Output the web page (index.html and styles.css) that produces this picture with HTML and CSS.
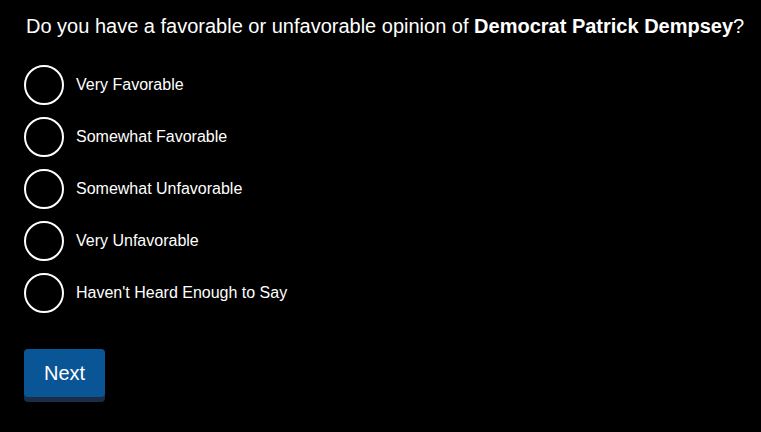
FILE: index.html
```html
<!DOCTYPE html>
<html lang="en">
<head>
    <meta charset="UTF-8">
    <meta name="viewport" content="width=device-width, initial-scale=1.0">
    <title>Survey Question</title>
    <link rel="stylesheet" href="styles.css">
</head>
<body>
    <div class="survey">
        <h1 class="question">Do you have a favorable or unfavorable opinion of <strong>Democrat Patrick Dempsey</strong>?</h1>
        <div class="options">
            <label class="option"><input type="radio" name="opinion" value="1"><span class="dot"></span>Very Favorable</label>
            <label class="option"><input type="radio" name="opinion" value="2"><span class="dot"></span>Somewhat Favorable</label>
            <label class="option"><input type="radio" name="opinion" value="3"><span class="dot"></span>Somewhat Unfavorable</label>
            <label class="option"><input type="radio" name="opinion" value="4"><span class="dot"></span>Very Unfavorable</label>
            <label class="option"><input type="radio" name="opinion" value="5"><span class="dot"></span>Haven't Heard Enough to Say</label>
        </div>
        <button class="next" type="button">Next</button>
    </div>
</body>
</html>
```

FILE: styles.css
```css
body {
    margin: 0;
    padding: 0;
    background-color: #000;
    color: #fff;
    font-family: "Liberation Sans", Arial, sans-serif;
}
.survey {
    padding: 15px 8px 24px 24px;
}
.question {
    margin: 0 0 27px 2px;
    font-size: 20px;
    font-weight: normal;
    line-height: 23px;
    white-space: nowrap;
}
.question strong {
    font-weight: bold;
}
.options {
    display: flex;
    flex-direction: column;
    gap: 12px;
}
.option {
    display: flex;
    align-items: center;
    gap: 12px;
    font-size: 16px;
    cursor: pointer;
}
.option input {
    display: none;
}
.dot {
    box-sizing: border-box;
    width: 40px;
    height: 40px;
    border: 2px solid #fff;
    border-radius: 50%;
}
.option input:checked + .dot {
    background-color: #0a5596;
}
.next {
    margin-top: 36px;
    padding: 0 20px;
    height: 48px;
    border: none;
    border-radius: 4px;
    background-color: #0a5596;
    box-shadow: 0 5px 0 #1b2b48;
    color: #fff;
    font-family: inherit;
    font-size: 20px;
}
```
